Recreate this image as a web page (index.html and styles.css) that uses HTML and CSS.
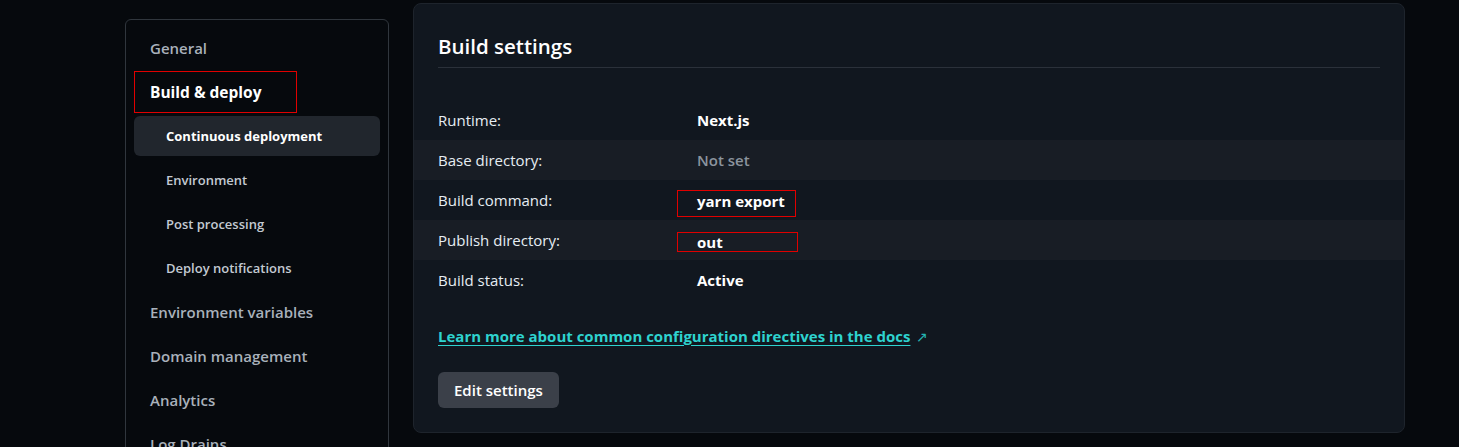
FILE: index.html
```html
<!DOCTYPE html>
<html lang="en">
<head>
  <meta charset="UTF-8">
  <meta name="viewport" content="width=device-width, initial-scale=1.0">
  <title>Build &amp; deploy</title>
  <link rel="stylesheet" href="styles.css">
</head>
<body>
  <div class="layout">
    <nav class="sidebar">
      <a class="nav-item">General</a>
      <a class="nav-item current marked">Build &amp; deploy</a>
      <a class="nav-item sub active">Continuous deployment</a>
      <a class="nav-item sub">Environment</a>
      <a class="nav-item sub">Post processing</a>
      <a class="nav-item sub">Deploy notifications</a>
      <a class="nav-item">Environment variables</a>
      <a class="nav-item">Domain management</a>
      <a class="nav-item">Analytics</a>
      <a class="nav-item">Log Drains</a>
    </nav>

    <section class="card">
      <h2>Build settings</h2>
      <div class="divider"></div>

      <dl class="settings">
        <div class="row">
          <dt>Runtime:</dt>
          <dd>Next.js</dd>
        </div>
        <div class="row">
          <dt>Base directory:</dt>
          <dd class="muted">Not set</dd>
        </div>
        <div class="row">
          <dt>Build command:</dt>
          <dd><span class="marked-value tall">yarn export</span></dd>
        </div>
        <div class="row">
          <dt>Publish directory:</dt>
          <dd><span class="marked-value">out</span></dd>
        </div>
        <div class="row">
          <dt>Build status:</dt>
          <dd>Active</dd>
        </div>
      </dl>

      <p class="docs">
        <a href="#">Learn more about common configuration directives in the docs</a>
        <span class="ext">&#8599;</span>
      </p>

      <button class="btn">Edit settings</button>
    </section>
  </div>
</body>
</html>
```

FILE: styles.css
```css
body {
  margin: 0;
  font-family: 'Open Sans', 'Noto Sans', sans-serif;
  background-color: #06090d;
  color: #e6edf3;
  overflow: hidden;
}
.layout {
  display: flex;
  align-items: flex-start;
  padding-left: 125px;
  gap: 24px;
}

/* sidebar */
.sidebar {
  margin-top: 19px;
  width: 246px;
  height: 480px;
  padding: 8px;
  border: 1px solid #30363d;
  border-radius: 6px;
  display: flex;
  flex-direction: column;
  gap: 4px;
}
.nav-item {
  display: flex;
  align-items: center;
  height: 40px;
  padding-left: 16px;
  border-radius: 6px;
  font-size: 15px;
  font-weight: 600;
  color: #a9b1bb;
  flex-shrink: 0;
}
.nav-item.current {
  color: #ffffff;
  font-weight: 700;
  font-size: 15.5px;
}
.nav-item.marked {
  width: 146px;
  margin-left: 1px;
  padding-left: 15px;
  border-radius: 0;
  outline: 1px solid #e00000;
}
.nav-item.sub {
  padding-left: 32px;
  font-size: 13px;
  color: #c3cad2;
}
.nav-item.active {
  background-color: #21262d;
  color: #ffffff;
  font-weight: 700;
}

/* card */
.card {
  margin-top: 3px;
  width: 990px;
  height: 428px;
  background-color: #11171f;
  border: 1px solid #1e242c;
  border-radius: 8px;
}
.card h2 {
  margin: 0;
  padding: 28px 24px 0;
  height: 35px;
  font-size: 20.5px;
  font-weight: 600;
  line-height: 28px;
  color: #ffffff;
}
.divider {
  margin: 0 24px;
  height: 1px;
  background-color: #2b313a;
}
.settings {
  margin: 32px 0 0;
}
.row {
  display: flex;
  align-items: center;
  height: 40px;
  padding: 0 24px;
  font-size: 15px;
}
.row:nth-child(even) {
  background-color: #181d25;
}
.row dt {
  width: 259px;
}
.row dd {
  margin: 0;
  font-weight: 700;
  color: #ffffff;
}
.row dd.muted {
  color: #8b949e;
  font-weight: 600;
}
.marked-value {
  display: flex;
  align-items: center;
  margin-left: -20px;
  margin-top: 4px;
  padding-left: 19px;
  width: 100px;
  height: 18px;
  line-height: 18px;
  border: 1px solid #e00000;
}
.marked-value.tall {
  align-items: flex-start;
  height: 25px;
  line-height: 20px;
  width: 98px;
  margin-top: 7px;
}

.docs {
  margin: 25px 24px 0;
  font-size: 15px;
  font-weight: 700;
  line-height: 22px;
}
.docs a {
  color: #2ed3cf;
  text-underline-offset: 3px;
}
.ext {
  margin-left: 2px;
  color: #25b3b0;
  font-size: 14px;
  font-weight: 400;
}
.btn {
  margin: 24px 24px 0;
  height: 36px;
  padding: 0 16px;
  background-color: #3b4049;
  color: #ffffff;
  border: none;
  border-radius: 6px;
  font-family: inherit;
  font-size: 15px;
  font-weight: 600;
  cursor: pointer;
}
```
